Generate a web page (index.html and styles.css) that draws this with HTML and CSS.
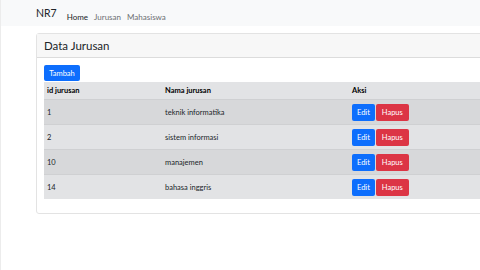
FILE: index.html
```html
<!DOCTYPE html>
<html lang="id">
<head>
    <meta charset="UTF-8">
    <meta name="viewport" content="width=device-width, initial-scale=1.0">
    <title>Data Jurusan</title>
    <link rel="stylesheet" href="styles.css">
</head>
<body>
    <div class="page">
        <nav class="navbar">
            <a class="brand" href="#">NR7</a>
            <ul class="nav-links">
                <li><a class="active" href="#">Home</a></li>
                <li><a href="#">Jurusan</a></li>
                <li><a href="#">Mahasiswa</a></li>
            </ul>
        </nav>

        <div class="container">
            <div class="card">
                <div class="card-header">Data Jurusan</div>
                <div class="card-body">
                    <button class="btn btn-primary btn-add">Tambah</button>
                    <table class="table">
                        <thead>
                            <tr>
                                <th class="col-id">id jurusan</th>
                                <th class="col-nama">Nama jurusan</th>
                                <th>Aksi</th>
                            </tr>
                        </thead>
                        <tbody>
                            <tr>
                                <td>1</td>
                                <td>teknik informatika</td>
                                <td><button class="btn btn-primary">Edit</button> <button class="btn btn-danger">Hapus</button></td>
                            </tr>
                            <tr>
                                <td>2</td>
                                <td>sistem informasi</td>
                                <td><button class="btn btn-primary">Edit</button> <button class="btn btn-danger">Hapus</button></td>
                            </tr>
                            <tr>
                                <td>10</td>
                                <td>manajemen</td>
                                <td><button class="btn btn-primary">Edit</button> <button class="btn btn-danger">Hapus</button></td>
                            </tr>
                            <tr>
                                <td>14</td>
                                <td>bahasa inggris</td>
                                <td><button class="btn btn-primary">Edit</button> <button class="btn btn-danger">Hapus</button></td>
                            </tr>
                        </tbody>
                    </table>
                </div>
            </div>
        </div>
    </div>
</body>
</html>
```

FILE: styles.css
```css
body {
    margin: 0;
    font-family: Lato, 'Open Sans', Arial, sans-serif;
    color: #212529;
    background-color: #fff;
    overflow: hidden;
}
.page {
    border-left: 1px solid #ececec;
    min-height: 270px;
}
.navbar {
    display: flex;
    align-items: center;
    height: 26px;
    padding-left: 35px;
    background-color: #f8f9fa;
}
.brand {
    font-size: 10.5px;
    color: #212529;
    text-decoration: none;
    margin-right: 10px;
}
.nav-links {
    display: flex;
    gap: 6px;
    list-style-type: none;
    margin: 0;
    padding: 0;
}
.nav-links a {
    font-size: 8px;
    color: #6c6f72;
    text-decoration: none;
}
.nav-links a.active {
    color: #212529;
}
.container {
    padding: 7px 0 0 35px;
    overflow: hidden;
}
.card {
    width: 470px;
    border: 1px solid #e3e3e3;
    border-radius: 3px;
    background-color: #fff;
}
.card-header {
    height: 23px;
    line-height: 23px;
    padding: 0 7px;
    font-size: 11.5px;
    background-color: #f7f7f7;
    border-bottom: 1px solid #dcdcdc;
}
.card-body {
    padding: 7px 7px 14px 7px;
}
.btn {
    border: none;
    border-radius: 2px;
    color: #fff;
    font-family: inherit;
    font-size: 7.5px;
    height: 17px;
    padding: 0 5px;
    cursor: pointer;
}
.btn-primary {
    background-color: #0d6efd;
}
.btn-danger {
    background-color: #dc3545;
    padding: 0 6px;
}
.btn-add {
    width: 36px;
    height: 16px;
    display: block;
}
.table {
    border-collapse: collapse;
    table-layout: fixed;
    width: 460px;
    margin-top: 1px;
    font-size: 7.5px;
}
.table th, .table td {
    text-align: left;
    padding: 0 3px;
    border-bottom: 1px solid #cfd0d2;
}
.table th {
    height: 17px;
    font-weight: 700;
    color: #000;
    background-color: #e2e3e5;
}
.table td {
    height: 24px;
    background-color: #e2e3e5;
}
.table tbody tr:nth-child(odd) td {
    background-color: #d7d8da;
}
.table tbody tr:last-child td {
    border-bottom: none;
}
.table td .btn {
    margin-right: -1px;
}
.col-id {
    width: 112px;
}
.col-nama {
    width: 181px;
}
```
